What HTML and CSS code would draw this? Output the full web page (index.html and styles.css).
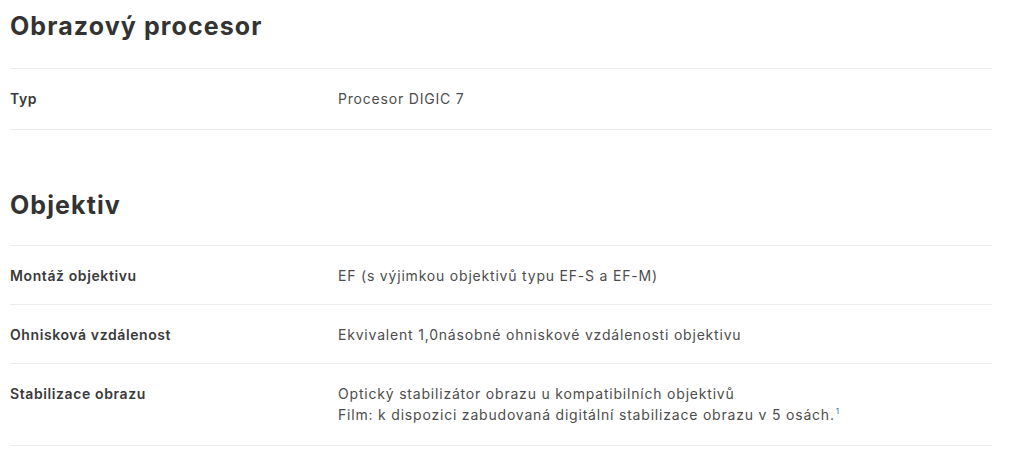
FILE: index.html
```html
<!DOCTYPE html>
<html lang="cs">
<head>
<meta charset="utf-8">
<title>Specifikace</title>
<link rel="stylesheet" href="styles.css">
</head>
<body>
<div class="specs">
  <section class="group">
    <h2 class="group-title">Obrazový procesor</h2>
    <div class="table">
      <div class="row">
        <div class="label">Typ</div>
        <div class="value">Procesor DIGIC 7</div>
      </div>
    </div>
  </section>
  <section class="group">
    <h2 class="group-title">Objektiv</h2>
    <div class="table">
      <div class="row">
        <div class="label">Montáž objektivu</div>
        <div class="value">EF (s výjimkou objektivů typu EF-S a EF-M)</div>
      </div>
      <div class="row">
        <div class="label">Ohnisková vzdálenost</div>
        <div class="value">Ekvivalent 1,0násobné ohniskové vzdálenosti objektivu</div>
      </div>
      <div class="row">
        <div class="label">Stabilizace obrazu</div>
        <div class="value">Optický stabilizátor obrazu u kompatibilních objektivů<br>Film: k dispozici zabudovaná digitální stabilizace obrazu v 5 osách.<sup class="note">1</sup></div>
      </div>
    </div>
  </section>
</div>
</body>
</html>
```

FILE: styles.css
```css
html, body {
  margin: 0;
  padding: 0;
  background: #fff;
}
body {
  font-family: "Inter", "Noto Sans", sans-serif;
  color: #444;
}
.specs {
  width: 982px;
  padding: 0 0 0 10px;
}
.group-title {
  margin: 0;
  font-size: 25px;
  font-weight: 700;
  letter-spacing: 1.1px;
  color: #333;
  line-height: 30px;
  padding-top: 11px;
  height: 68px;
  box-sizing: border-box;
}
.group + .group {
  margin-top: 52px;
}
.group + .group .group-title {
  padding-top: 8px;
  height: 63px;
}
.table {
  border-top: 1px solid #ececec;
}
.row {
  display: grid;
  grid-template-columns: 328px 1fr;
  padding: 19px 0 18px;
  border-bottom: 1px solid #ececec;
  font-size: 14px;
  line-height: 21px;
}
.row:last-child {
  padding-bottom: 20px;
}
.label {
  font-weight: 600;
  letter-spacing: 0.6px;
  color: #3a3a3a;
}
.value {
  letter-spacing: 0.8px;
  color: #4d4d4d;
}
.note {
  color: #2a6bb8;
  font-size: 8px;
  line-height: 0;
  vertical-align: 6px;
  margin-left: 1px;
  letter-spacing: 0;
}
```
